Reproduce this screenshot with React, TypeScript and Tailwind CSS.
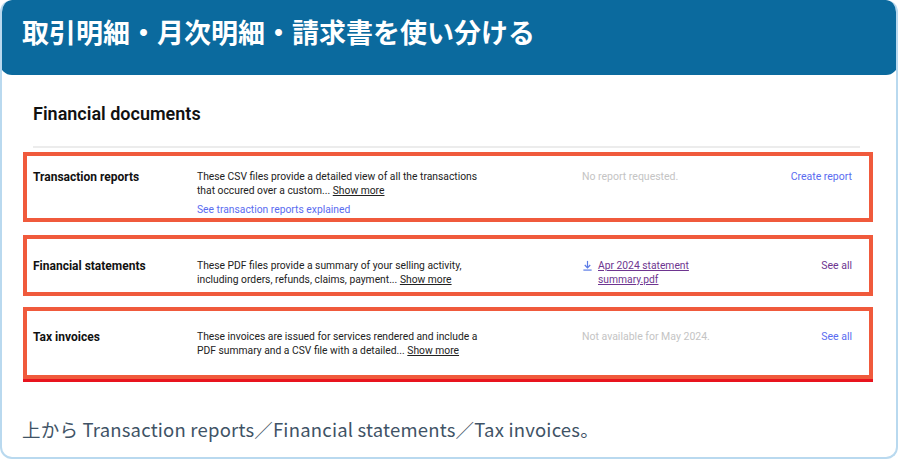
import React from 'react';

const jp = { fontFamily: '"Noto Sans CJK JP", "Noto Sans", sans-serif' };
const ui = { fontFamily: 'Roboto, "Liberation Sans", sans-serif' };

function DownloadIcon() {
    return (
        <svg width="11" height="11" viewBox="0 0 12 12" fill="none" stroke="#5b7be6" strokeWidth="1.3">
            <path d="M6 1v7" />
            <path d="M3 5.5l3 3 3-3" />
            <path d="M1.5 11h9" />
        </svg>
    );
}

interface RowProps {
    title: string;
    line1: string;
    line2: string;
    extra?: React.ReactNode;
    middle: React.ReactNode;
    action: React.ReactNode;
    className: string;
}

function Row({ title, line1, line2, extra, middle, action, className }: RowProps) {
    return (
        <div className={`border-4 border-[#f05a3c] flex items-start pl-[6px] pr-[17px] ${className}`}>
            <div className="w-[164px] text-[12px] font-bold text-[#111] leading-[14px]">{title}</div>
            <div className="w-[385px] text-[10.3px] text-[#222] leading-[14px]">
                <div>{line1}</div>
                <div>
                    {line2} <span className="underline">Show more</span>
                </div>
                {extra}
            </div>
            <div className="flex-1 text-[10.5px] leading-[14px]">{middle}</div>
            <div className="text-[10.5px] leading-[14px]">{action}</div>
        </div>
    );
}

export default function App() {
    return (
        <div className="w-[898px] h-[459px] bg-white">
            <div className="h-full flex flex-col border-2 border-t-0 border-[#b9d9ef] rounded-[12px] bg-white overflow-hidden">
                {/* Header */}
                <div className="-mx-[2px] h-[75px] bg-[#0b6a9e] rounded-[12px] flex items-start pt-[15px] pl-[22px]">
                    <h1 style={jp} className="text-white text-[27px] font-bold leading-[34px]">
                        取引明細・月次明細・請求書を使い分ける
                    </h1>
                </div>

                {/* Body */}
                <div style={ui} className="flex-1 flex flex-col">
                    <div className="pl-[31px] pr-[36px] pt-[28px]">
                        <h2 className="text-[18px] font-semibold text-[#111] leading-[22px]">Financial documents</h2>
                        <div className="mt-[21px] h-[2px] bg-[#ececec]" />
                    </div>

                    <div className="pl-[21px] pr-[23px] pt-[4px] flex flex-col">
                        <Row
                            className="h-[70px] pt-[14px]"
                            title="Transaction reports"
                            line1="These CSV files provide a detailed view of all the transactions"
                            line2="that occured over a custom..."
                            extra={<div className="mt-[5px] text-[#5a6cf0]">See transaction reports explained</div>}
                            middle={<span className="text-[#c4c4c4]">No report requested.</span>}
                            action={<span className="text-[#5a6cf0]">Create report</span>}
                        />
                        <Row
                            className="mt-[13px] h-[61px] pt-[20px]"
                            title="Financial statements"
                            line1="These PDF files provide a summary of your selling activity,"
                            line2="including orders, refunds, claims, payment..."
                            middle={
                                <div className="flex items-start gap-[5px] text-[#6e3590]">
                                    <span className="mt-[1px]"><DownloadIcon /></span>
                                    <span className="underline text-[10.3px]">
                                        Apr 2024 statement
                                        <br />
                                        summary.pdf
                                    </span>
                                </div>
                            }
                            action={<span className="text-[#6e3590]">See all</span>}
                        />
                        <Row
                            className="mt-[11px] h-[72px] pt-[19px] shadow-[0_3px_0_#e8141e]"
                            title="Tax invoices"
                            line1="These invoices are issued for services rendered and include a"
                            line2="PDF summary and a CSV file with a detailed..."
                            middle={<span className="text-[#c4c4c4]">Not available for May 2024.</span>}
                            action={<span className="text-[#5a6cf0]">See all</span>}
                        />
                    </div>

                    <p style={jp} className="mt-[38px] pl-[20px] text-[18.5px] tracking-[0.2px] leading-[24px] text-[#3f5366]">
                        上から Transaction reports／Financial statements／Tax invoices。
                    </p>
                </div>
            </div>
        </div>
    );
}
